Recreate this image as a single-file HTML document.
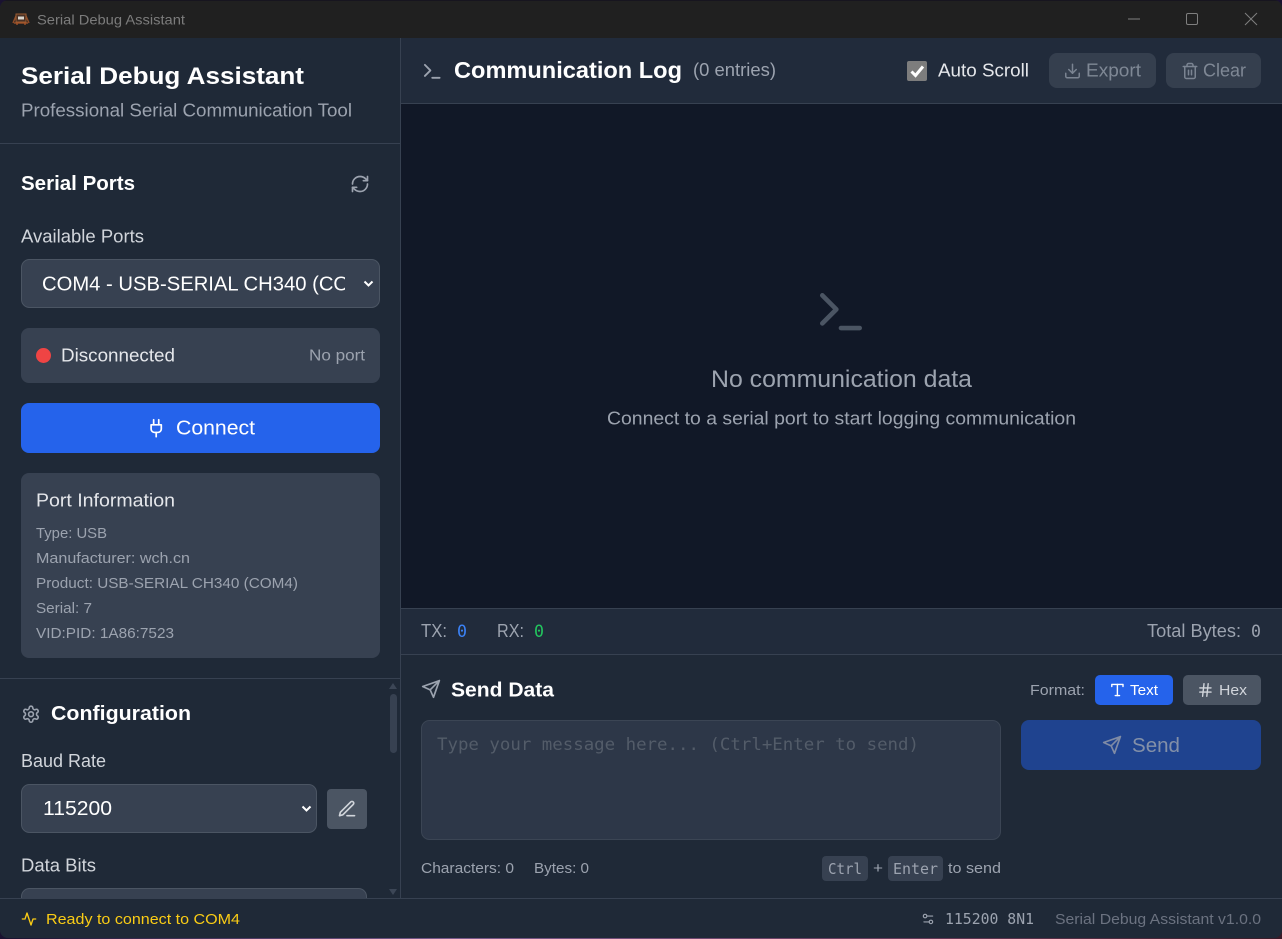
<!DOCTYPE html>
<html lang="en">
<head>
<meta charset="utf-8">
<title>Serial Debug Assistant</title>
<style>
html,body{margin:0;padding:0;width:1282px;height:939px;overflow:hidden;background:#1a1230}
svg{display:block;position:absolute;left:0;top:0}
text{font-family:"Liberation Sans",sans-serif;white-space:pre}
.m{font-family:"DejaVu Sans Mono","Liberation Mono",monospace}
.b{font-weight:700}
.i{fill:none;stroke-linecap:round;stroke-linejoin:round;stroke-width:2}
</style>
</head>
<body>
<svg width="1282" height="939" viewBox="0 0 1282 939" xmlns="http://www.w3.org/2000/svg">
<defs>
<clipPath id="win"><rect x="0" y="0" width="1282" height="938" rx="8"/></clipPath>
<clipPath id="selclip"><rect x="42" y="262" width="303" height="44"/></clipPath>
<clipPath id="cfgclip"><rect x="0" y="679" width="400" height="219"/></clipPath>
<linearGradient id="wall" x1="0" x2="1" y1="0" y2="0"><stop offset="0" stop-color="#1a1230"/><stop offset=".35" stop-color="#7a5a8c"/><stop offset=".7" stop-color="#6a3a5a"/><stop offset="1" stop-color="#3a1a28"/></linearGradient>
</defs>
<rect x="0" y="930" width="1282" height="9" fill="url(#wall)"/>
<g clip-path="url(#win)">
<!-- base -->
<rect width="1282" height="938" fill="#1f2937"/>
<!-- title bar -->
<rect width="1282" height="38" fill="#202020"/>
<rect width="1282" height="1" fill="#17151f"/>
<g transform="translate(12,13)">
<path d="M1 10 L4 3 H14 L17 10" fill="none" stroke="#8f4c28" stroke-width="1.500"/>
<rect x="4" y="1" width="10" height="8" fill="#4a3226" stroke="#9a5a30"/>
<rect x="6" y="3.500" width="6" height="3" fill="#d8d4cc"/>
<path d="M2 10H16M5 10v2M13 10v2" stroke="#a9562a" stroke-width="1.300"/>
</g>
<text x="37" y="24.500" font-size="14" fill="#7c7c7c" textLength="148" lengthAdjust="spacingAndGlyphs">Serial Debug Assistant</text>
<path d="M1128 19H1140" stroke="#7f7f7f"/>
<rect x="1186.500" y="13.500" width="11" height="11" rx="1.500" fill="none" stroke="#7f7f7f"/>
<path d="M1245 13 L1257 25 M1257 13 L1245 25" stroke="#7f7f7f"/>

<!-- sidebar -->
<g>
<text x="21" y="84" font-size="24" class="b" fill="#ffffff" textLength="283" lengthAdjust="spacingAndGlyphs">Serial Debug Assistant</text>
<text x="21" y="116.500" font-size="18" fill="#9ca3af" textLength="331" lengthAdjust="spacingAndGlyphs">Professional Serial Communication Tool</text>
<rect x="0" y="143" width="400" height="1" fill="#374151"/>

<text x="21" y="190" font-size="20" class="b" fill="#ffffff" textLength="114" lengthAdjust="spacingAndGlyphs">Serial Ports</text>
<g class="i" stroke="#9ca3af" transform="translate(350,174) scale(.833)">
<path d="M3 12a9 9 0 0 1 9-9 9.750 9.750 0 0 1 6.740 2.740L21 8"/><path d="M21 3v5h-5"/><path d="M21 12a9 9 0 0 1-9 9 9.750 9.750 0 0 1-6.740-2.740L3 16"/><path d="M8 16H3v5"/>
</g>

<text x="21" y="242.500" font-size="18" fill="#d1d5db" textLength="123" lengthAdjust="spacingAndGlyphs">Available Ports</text>
<rect x="21.500" y="259.500" width="358" height="48" rx="8" fill="#374151" stroke="#4b5563"/>
<g clip-path="url(#selclip)"><text x="42" y="290.500" font-size="20" fill="#ffffff" textLength="342" lengthAdjust="spacingAndGlyphs">COM4 - USB-SERIAL CH340 (COM4)</text></g>
<path d="M364.500 281.500 L368.500 285.500 L372.500 281.500" fill="none" stroke="#ffffff" stroke-width="2"/>

<rect x="21" y="328" width="359" height="55" rx="8" fill="#374151"/>
<circle cx="43.500" cy="355.500" r="7.500" fill="#ef4444"/>
<text x="61" y="361.500" font-size="18" fill="#e5e7eb" textLength="114" lengthAdjust="spacingAndGlyphs">Disconnected</text>
<text x="309" y="360.500" font-size="16" fill="#9ca3af" textLength="56" lengthAdjust="spacingAndGlyphs">No port</text>

<rect x="21" y="403" width="359" height="50" rx="8" fill="#2563eb"/>
<g class="i" stroke="#ffffff" stroke-width="2.400" transform="translate(146,418) scale(.85)">
<path d="M12 22v-5"/><path d="M9 8V2"/><path d="M15 8V2"/><path d="M18 8v5a4 4 0 0 1-4 4h-4a4 4 0 0 1-4-4V8Z"/>
</g>
<text x="176" y="434.500" font-size="20" fill="#ffffff" textLength="79" lengthAdjust="spacingAndGlyphs">Connect</text>

<rect x="21" y="473" width="359" height="185" rx="8" fill="#374151"/>
<text x="36" y="506.500" font-size="18" fill="#e5e7eb" textLength="139" lengthAdjust="spacingAndGlyphs">Port Information</text>
<g font-size="15" fill="#9ca3af">
<text x="36" y="538" textLength="71" lengthAdjust="spacingAndGlyphs">Type: USB</text>
<text x="36" y="563" textLength="154" lengthAdjust="spacingAndGlyphs">Manufacturer: wch.cn</text>
<text x="36" y="588" textLength="262" lengthAdjust="spacingAndGlyphs">Product: USB-SERIAL CH340 (COM4)</text>
<text x="36" y="613" textLength="56" lengthAdjust="spacingAndGlyphs">Serial: 7</text>
<text x="36" y="638" textLength="138" lengthAdjust="spacingAndGlyphs">VID:PID: 1A86:7523</text>
</g>
<rect x="0" y="678" width="400" height="1" fill="#374151"/>

<!-- configuration (scrolling area) -->
<g clip-path="url(#cfgclip)">
<g class="i" stroke="#9ca3af" transform="translate(21.400,704.600) scale(.8)">
<path d="M12.220 2h-.44a2 2 0 0 0-2 2v.18a2 2 0 0 1-1 1.730l-.43.25a2 2 0 0 1-2 0l-.15-.08a2 2 0 0 0-2.730.73l-.22.38a2 2 0 0 0 .73 2.730l.15.1a2 2 0 0 1 1 1.720v.51a2 2 0 0 1-1 1.740l-.15.09a2 2 0 0 0-.73 2.730l.22.38a2 2 0 0 0 2.730.73l.15-.08a2 2 0 0 1 2 0l.43.25a2 2 0 0 1 1 1.730V20a2 2 0 0 0 2 2h.44a2 2 0 0 0 2-2v-.18a2 2 0 0 1 1-1.730l.43-.25a2 2 0 0 1 2 0l.15.08a2 2 0 0 0 2.730-.73l.22-.39a2 2 0 0 0-.73-2.730l-.15-.08a2 2 0 0 1-1-1.740v-.5a2 2 0 0 1 1-1.740l.15-.09a2 2 0 0 0 .73-2.730l-.22-.38a2 2 0 0 0-2.730-.73l-.15.08a2 2 0 0 1-2 0l-.43-.25a2 2 0 0 1-1-1.730V4a2 2 0 0 0-2-2z"/><circle cx="12" cy="12" r="3"/>
</g>
<text x="51" y="720" font-size="20" class="b" fill="#ffffff" textLength="140" lengthAdjust="spacingAndGlyphs">Configuration</text>
<text x="21" y="767" font-size="18" fill="#d1d5db" textLength="85" lengthAdjust="spacingAndGlyphs">Baud Rate</text>
<rect x="21.500" y="784.500" width="295" height="48" rx="8" fill="#374151" stroke="#4b5563"/>
<text x="43" y="815" font-size="20" fill="#ffffff" textLength="69" lengthAdjust="spacingAndGlyphs">115200</text>
<path d="M302.500 806.500 L306.500 810.500 L310.500 806.500" fill="none" stroke="#ffffff" stroke-width="2"/>
<rect x="327" y="789" width="40" height="40" rx="4" fill="#4b5563"/>
<g class="i" stroke="#d1d5db" stroke-width="1.800" transform="translate(337,799) scale(.833)">
<path d="M12 20h9"/><path d="M16.500 3.500a2.120 2.120 0 0 1 3 3L7 19l-4 1 1-4Z"/>
</g>
<text x="21" y="871.500" font-size="18" fill="#d1d5db" textLength="75" lengthAdjust="spacingAndGlyphs">Data Bits</text>
<rect x="21.500" y="888.500" width="345" height="48" rx="8" fill="#374151" stroke="#4b5563"/>
</g>
<!-- scrollbar -->
<path d="M393 683 L397 689 H389 Z" fill="#3c4656"/>
<rect x="390" y="694" width="7" height="59" rx="3.500" fill="#374151"/>
<path d="M393 895 L397 889 H389 Z" fill="#3c4656"/>
</g>

<rect x="400" y="38" width="1" height="860" fill="#374151"/>

<!-- log header -->
<rect x="401" y="38" width="881" height="65" fill="#212b3b"/>
<rect x="401" y="103" width="881" height="1" fill="#374151"/>
<g class="i" stroke="#9ca3af" stroke-width="1.800" transform="translate(421.200,60.300) scale(.92)">
<polyline points="4 17 10 11 4 5"/><line x1="12" y1="19" x2="20" y2="19"/>
</g>
<text x="454" y="78" font-size="23" class="b" fill="#ffffff" textLength="228" lengthAdjust="spacingAndGlyphs">Communication Log</text>
<text x="693" y="76" font-size="18" fill="#9ca3af" textLength="83" lengthAdjust="spacingAndGlyphs">(0 entries)</text>
<rect x="907" y="61" width="20" height="20" rx="2" fill="#7d7d7d"/>
<path d="M911.500 71.500 L915.500 75.500 L923 66.500" fill="none" stroke="#ffffff" stroke-width="3"/>
<text x="938" y="76.500" font-size="18" fill="#e5e7eb" textLength="91" lengthAdjust="spacingAndGlyphs">Auto Scroll</text>
<rect x="1049" y="53" width="107" height="35" rx="8" fill="#353f4e"/>
<g class="i" stroke="#7b8492" transform="translate(1063.500,62) scale(.75)">
<path d="M21 15v4a2 2 0 0 1-2 2H5a2 2 0 0 1-2-2v-4"/><polyline points="7 10 12 15 17 10"/><line x1="12" y1="15" x2="12" y2="3"/>
</g>
<text x="1086" y="76.500" font-size="18" fill="#7f8895" textLength="55" lengthAdjust="spacingAndGlyphs">Export</text>
<rect x="1166" y="53" width="95" height="35" rx="8" fill="#353f4e"/>
<g class="i" stroke="#7b8492" transform="translate(1181,62) scale(.75)">
<path d="M3 6h18"/><path d="M19 6v14c0 1-1 2-2 2H7c-1 0-2-1-2-2V6"/><path d="M8 6V4c0-1 1-2 2-2h4c1 0 2 1 2 2v2"/><line x1="10" y1="11" x2="10" y2="17"/><line x1="14" y1="11" x2="14" y2="17"/>
</g>
<text x="1203" y="76.500" font-size="18" fill="#7f8895" textLength="43" lengthAdjust="spacingAndGlyphs">Clear</text>

<!-- log body -->
<rect x="401" y="104" width="881" height="504" fill="#111827"/>
<g class="i" stroke="#4b5563" transform="translate(813,283.700) scale(2.333)">
<polyline points="4 17 10 11 4 5"/><line x1="12" y1="19" x2="20" y2="19"/>
</g>
<text x="711" y="387" font-size="24" fill="#9ca3af" textLength="261" lengthAdjust="spacingAndGlyphs">No communication data</text>
<text x="607" y="424.500" font-size="18" fill="#9ca3af" textLength="469" lengthAdjust="spacingAndGlyphs">Connect to a serial port to start logging communication</text>

<!-- stats -->
<rect x="401" y="608" width="881" height="1" fill="#374151"/>
<rect x="401" y="609" width="881" height="45" fill="#212b3b"/>
<rect x="401" y="654" width="881" height="1" fill="#374151"/>
<text x="421" y="637" font-size="18" fill="#9ca3af" textLength="26" lengthAdjust="spacingAndGlyphs">TX:</text>
<text x="457" y="637" font-size="17" class="m" fill="#3b82f6" textLength="10" lengthAdjust="spacingAndGlyphs">0</text>
<text x="497" y="637" font-size="18" fill="#9ca3af" textLength="27" lengthAdjust="spacingAndGlyphs">RX:</text>
<text x="534" y="637" font-size="17" class="m" fill="#22c55e" textLength="10" lengthAdjust="spacingAndGlyphs">0</text>
<text x="1147" y="637" font-size="18" fill="#9ca3af" textLength="94" lengthAdjust="spacingAndGlyphs">Total Bytes:</text>
<text x="1251" y="637" font-size="17" class="m" fill="#9ca3af" textLength="10" lengthAdjust="spacingAndGlyphs">0</text>

<!-- send data -->
<g class="i" stroke="#9ca3af" stroke-width="1.800" transform="translate(421,679) scale(.833)">
<path d="m22 2-7 20-4-9-9-4Z"/><path d="M22 2 11 13"/>
</g>
<text x="451" y="696.500" font-size="20" class="b" fill="#ffffff" textLength="103" lengthAdjust="spacingAndGlyphs">Send Data</text>
<text x="1030" y="695" font-size="15" fill="#9ca3af" textLength="55" lengthAdjust="spacingAndGlyphs">Format:</text>
<rect x="1095" y="675" width="78" height="30" rx="5" fill="#2563eb"/>
<g class="i" stroke="#ffffff" transform="translate(1109,681.600) scale(.7)">
<polyline points="4 7 4 4 20 4 20 7"/><line x1="9" y1="20" x2="15" y2="20"/><line x1="12" y1="4" x2="12" y2="20"/>
</g>
<text x="1130" y="695" font-size="15" fill="#ffffff" textLength="28" lengthAdjust="spacingAndGlyphs">Text</text>
<rect x="1183" y="675" width="78" height="30" rx="5" fill="#4b5563"/>
<g class="i" stroke="#d1d5db" transform="translate(1197,681.600) scale(.7)">
<line x1="4" y1="9" x2="20" y2="9"/><line x1="4" y1="15" x2="20" y2="15"/><line x1="10" y1="3" x2="8" y2="21"/><line x1="16" y1="3" x2="14" y2="21"/>
</g>
<text x="1219" y="695" font-size="15" fill="#d1d5db" textLength="28" lengthAdjust="spacingAndGlyphs">Hex</text>

<rect x="421.500" y="720.500" width="579" height="119" rx="8" fill="#2d3748" stroke="#3b4554"/>
<text x="437" y="750" font-size="17" class="m" fill="#535c69" textLength="482" lengthAdjust="spacingAndGlyphs">Type your message here... (Ctrl+Enter to send)</text>
<rect x="1021" y="720" width="240" height="50" rx="8" fill="#1f438f"/>
<g class="i" stroke="#7f8ba5" stroke-width="1.800" transform="translate(1102,735) scale(.833)">
<path d="m22 2-7 20-4-9-9-4Z"/><path d="M22 2 11 13"/>
</g>
<text x="1132" y="752" font-size="20" fill="#8390a8" textLength="48" lengthAdjust="spacingAndGlyphs">Send</text>

<text x="421" y="873" font-size="15" fill="#9ca3af" textLength="93" lengthAdjust="spacingAndGlyphs">Characters: 0</text>
<text x="534" y="873" font-size="15" fill="#9ca3af" textLength="55" lengthAdjust="spacingAndGlyphs">Bytes: 0</text>
<rect x="822" y="856" width="46" height="25" rx="4" fill="#374151"/>
<text x="828" y="874" font-size="15" class="m" fill="#9ca3af" textLength="34" lengthAdjust="spacingAndGlyphs">Ctrl</text>
<text x="873" y="873" font-size="15" fill="#9ca3af" textLength="10" lengthAdjust="spacingAndGlyphs">+</text>
<rect x="888" y="856" width="55" height="25" rx="4" fill="#374151"/>
<text x="893" y="874" font-size="15" class="m" fill="#9ca3af" textLength="45" lengthAdjust="spacingAndGlyphs">Enter</text>
<text x="948" y="873" font-size="15" fill="#9ca3af" textLength="53" lengthAdjust="spacingAndGlyphs">to send</text>

<!-- status bar -->
<rect x="0" y="898" width="1282" height="40" fill="#1f2937"/>
<rect x="0" y="898" width="1282" height="1" fill="#374151"/>
<g class="i" stroke="#facc15" transform="translate(21,911) scale(.667)">
<path d="M22 12h-4l-3 9L9 3l-3 9H2"/>
</g>
<text x="46" y="924" font-size="15" fill="#facc15" textLength="194" lengthAdjust="spacingAndGlyphs">Ready to connect to COM4</text>
<g class="i" stroke="#9ca3af" stroke-width="2.500" transform="translate(921,912) scale(.583)">
<path d="M20 7h-9"/><path d="M14 17H5"/><circle cx="17" cy="17" r="3"/><circle cx="7" cy="7" r="3"/>
</g>
<text x="945" y="924" font-size="15" class="m" fill="#9ca3af" textLength="89" lengthAdjust="spacingAndGlyphs">115200 8N1</text>
<text x="1055" y="924" font-size="15" fill="#6b7280" textLength="206" lengthAdjust="spacingAndGlyphs">Serial Debug Assistant v1.0.0</text>
</g>
</svg>
</body>
</html>
